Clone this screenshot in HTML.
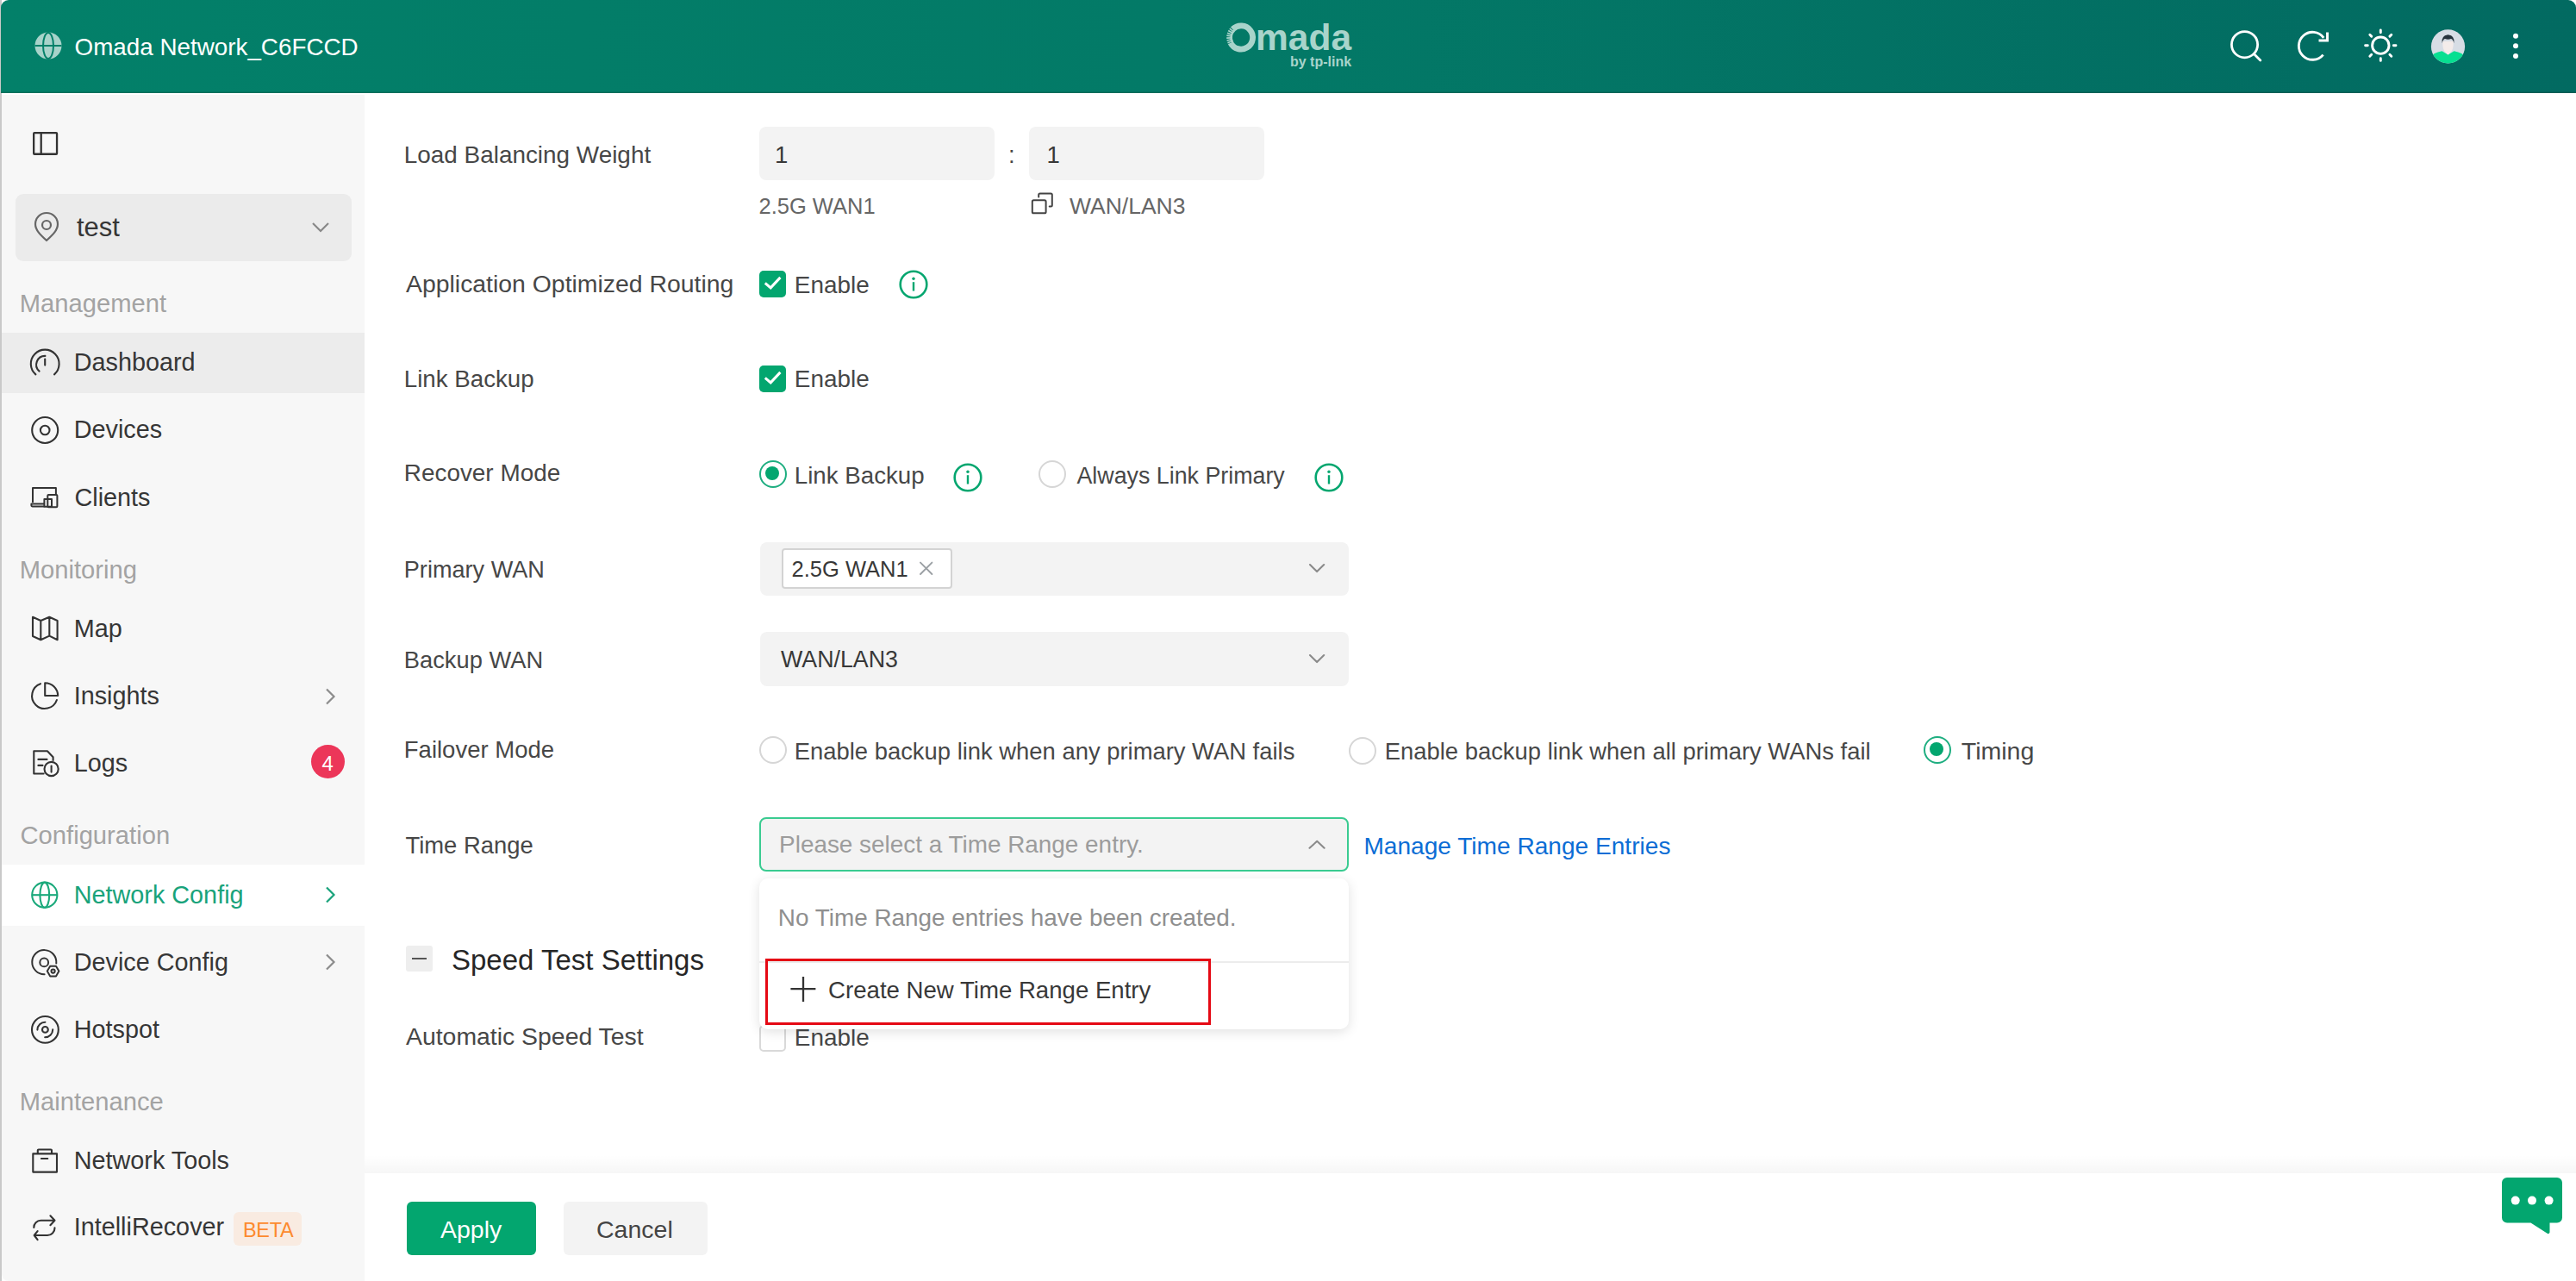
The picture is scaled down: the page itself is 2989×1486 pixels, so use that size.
<!DOCTYPE html>
<html><head><meta charset="utf-8">
<style>
*{box-sizing:border-box;margin:0;padding:0}
html,body{width:2989px;height:1486px;overflow:hidden;background:#fff;font-family:"Liberation Sans",sans-serif}
.a{position:absolute}
.t{position:absolute;white-space:nowrap;line-height:1;font-size:27.5px;color:#474747}
.s{font-size:28px;color:#363636}
.sec{color:#a3a3a3}
#edge{left:0;top:0;width:1.5px;height:1486px;background:#c9c9c9}
#hdr{left:1px;top:0;width:2988px;height:108px;border-radius:9px 9px 0 0;background:linear-gradient(90deg,#038069 0%,#037a67 45%,#026a61 100%);box-shadow:inset 0 -1.5px 0 rgba(0,0,0,0.12)}
#side{left:1.5px;top:110px;width:421.5px;height:1376px;background:#f7f7f7;border-bottom-left-radius:8px}
.hl{left:2px;width:421px;height:70px}
.inp{background:#f3f3f3;border-radius:8px}
.cb{width:31px;height:31px;border-radius:5px;background:#03a66f}
.cbo{width:31px;height:31px;border-radius:5px;border:2px solid #d9d9d9;background:#fff}
.rad{width:32px;height:32px;border-radius:50%;border:2px solid #d6d6d6;background:#fff}
.rad.on{border-color:#1eae80}
.rad.on::after{content:"";position:absolute;left:5px;top:4.7px;width:16px;height:16px;border-radius:50%;background:#03a66f}
svg{position:absolute;overflow:visible}
</style></head><body>
<div id="edge" class="a"></div>
<div id="hdr" class="a"></div>
<div id="side" class="a"></div>
<div class="a hl" style="top:386px;background:#ececec"></div>
<div class="a hl" style="top:1002.5px;height:71px;background:#fff"></div>

<!-- header -->
<svg style="left:40px;top:37px" width="32" height="32" viewBox="0 0 32 32">
 <circle cx="16" cy="16" r="15.5" fill="#a7d3ca"/>
 <path d="M0.5 16H31.5" stroke="#038069" stroke-width="2"/>
 <ellipse cx="16" cy="16" rx="6" ry="15" fill="none" stroke="#038069" stroke-width="2"/>
</svg>
<div class="t" style="left:86.6px;top:40.7px;color:#fff;font-size:27.8px">Omada Network_C6FCCD</div>

<svg style="left:1420px;top:24px" width="40" height="40" viewBox="0 0 40 40">
 <path d="M10.55 9.72A13.6 13.6 0 1 1 7.88 25.67" fill="none" stroke="#a8d4cb" stroke-width="6.8"/>
 <path d="M10.13 25.20A11.4 11.4 0 0 1 12.52 10.90" fill="none" stroke="#a8d4cb" stroke-width="2.6"/>
 <path d="M9.34 23.81L4.42 25.79M8.75 21.89L3.57 22.99M8.51 19.90L3.21 20.09M8.61 17.90L3.36 17.16M9.06 15.95L4.02 14.31M9.85 14.10L5.17 11.61M10.94 12.42L6.76 9.16M12.30 10.95L8.76 7.02" stroke="#a8d4cb" stroke-width="1.7"/>
</svg>
<div class="t" style="left:1457px;top:23px;color:#a8d4cb;font-size:42.5px;font-weight:bold">mada</div>
<div class="t" style="left:1497px;top:64.1px;color:#a8d4cb;font-size:16px;font-weight:bold">by tp-link</div>
<!-- header icons -->
<svg style="left:2580px;top:30px" width="50" height="50" viewBox="0 0 50 50">
 <circle cx="24.5" cy="21.7" r="15.1" fill="none" stroke="#fff" stroke-width="2.8"/>
 <path d="M35.3 32.5L42.8 40" stroke="#fff" stroke-width="2.8" stroke-linecap="round"/>
</svg>
<svg style="left:2660px;top:30px" width="50" height="50" viewBox="0 0 50 50">
 <path d="M35.6 33.6A16 16 0 1 1 36.2 13.8" fill="none" stroke="#fff" stroke-width="2.9"/>
 <path d="M30.5 17H40.5V7.5" fill="none" stroke="#fff" stroke-width="2.9"/>
</svg>
<svg style="left:2737px;top:28px" width="50" height="50" viewBox="0 0 50 50">
 <circle cx="25.3" cy="24.7" r="9.7" fill="none" stroke="#fff" stroke-width="2.9"/>
 <g stroke="#fff" stroke-width="2.9" stroke-linecap="round">
 <path d="M25.3 7V9.7M25.3 39.7V42.4M7.6 24.7H10.3M40.3 24.7H43M12.8 12.2L14.7 14.1M35.9 35.3L37.8 37.2M37.8 12.2L35.9 14.1M14.7 35.3L12.8 37.2"/>
 </g>
</svg>
<svg style="left:2820px;top:34px" width="40" height="40" viewBox="0 0 40 40">
 <defs><clipPath id="av"><circle cx="20.5" cy="19.9" r="19.6"/></clipPath></defs>
 <circle cx="20.5" cy="19.9" r="19.6" fill="#d7dde5"/>
 <g clip-path="url(#av)">
 <path d="M0 42V33Q3 27 13.5 25.2L20.5 29.5L27.5 25.2Q38 27 41 33V42Z" fill="#07df91"/>
 <path d="M14.3 14Q14 24 17.5 26.5L20.5 29.5L23.5 26.5Q27 24 26.7 14Z" fill="#f4ecea"/>
 <path d="M13.6 16.5Q12 7.5 20.5 6.3Q29 7.5 27.4 16.5Q26.5 11.5 24 11Q20.5 12.5 17 11Q14.5 11.5 13.6 16.5Z" fill="#26323c"/>
 </g>
</svg>
<svg style="left:2910px;top:34px" width="20" height="40" viewBox="0 0 20 40">
 <circle cx="9" cy="7.7" r="3" fill="#fff"/><circle cx="9" cy="19.3" r="3" fill="#fff"/><circle cx="9" cy="31.1" r="3" fill="#fff"/>
</svg>

<!-- sidebar -->
<svg style="left:38px;top:152.8px" width="30" height="28" viewBox="0 0 30 28">
 <rect x="1.15" y="1.15" width="26.9" height="24.6" rx="0.8" fill="none" stroke="#333" stroke-width="2.3"/>
 <path d="M9.7 1V26.8" stroke="#333" stroke-width="2.3"/>
</svg>
<div class="a" style="left:18px;top:225px;width:390px;height:78px;background:#ebebeb;border-radius:9px"></div>
<svg style="left:39px;top:247px" width="30" height="34" viewBox="0 0 30 34">
 <path d="M15 32C8 25.5 2 20 2 13A13 13 0 0 1 28 13C28 20 22 25.5 15 32Z" fill="none" stroke="#666" stroke-width="2.2" stroke-linejoin="round"/>
 <circle cx="15" cy="14" r="5" fill="none" stroke="#666" stroke-width="2.2"/>
</svg>
<div class="t s" style="left:89px;top:247.5px;font-size:31px">test</div>
<svg style="left:360px;top:256px" width="24" height="16" viewBox="0 0 24 16">
 <path d="M3 3L12 12L21 3" fill="none" stroke="#888" stroke-width="2.2"/>
</svg>


<!-- sidebar icons -->
<svg style="left:28px;top:398px" width="50" height="50" viewBox="0 0 50 50" fill="none" stroke="#333" stroke-width="2.1" stroke-linecap="round">
 <path d="M13.4 36.4A16.4 16.4 0 1 1 35 36.4"/>
 <path d="M17.6 32.6A10.1 10.1 0 0 1 24.4 14.9"/>
 <path d="M24.2 18.5V25.6"/>
</svg>
<svg style="left:28px;top:475px" width="50" height="50" viewBox="0 0 50 50" fill="none" stroke="#333" stroke-width="2.1">
 <circle cx="24.2" cy="24" r="15"/><circle cx="24.2" cy="24" r="5.3"/>
</svg>
<svg style="left:28px;top:553px" width="50" height="50" viewBox="0 0 50 50" fill="none" stroke="#333" stroke-width="2" stroke-linejoin="round">
 <path d="M10 30V12.9H36.9V21"/>
 <path d="M23.4 34.6H9.8A1.5 1.5 0 0 1 8.4 33V31.6H23.4"/>
 <rect x="27.3" y="21" width="11.1" height="14.3" rx="1"/>
 <rect x="23.4" y="26" width="8.6" height="8.7"/>
</svg>
<svg style="left:28px;top:704px" width="50" height="50" viewBox="0 0 50 50" fill="none" stroke="#333" stroke-width="2.1" stroke-linejoin="round">
 <path d="M10 11.7L19.3 16L29.3 11.7L38.6 16V38.3L29.3 33.6L19.3 38.3L10 34Z M19.3 16V38.3 M29.3 11.7V33.6"/>
</svg>
<svg style="left:28px;top:782px" width="50" height="50" viewBox="0 0 50 50" fill="none" stroke="#333" stroke-width="2.1">
 <path d="M24.2 10.3V25H39.2A15 15 0 0 0 24.2 10.3Z" stroke-linejoin="round"/>
 <path d="M19 11.2A14.8 14.8 0 1 0 37.9 30" stroke-linecap="round"/>
</svg>
<svg style="left:28px;top:860px" width="50" height="50" viewBox="0 0 50 50" fill="none" stroke="#333" stroke-width="2.1" stroke-linecap="round" stroke-linejoin="round">
 <path d="M22.6 37.5H11.3V11.3H26.9L33.6 18.3V21.9"/>
 <path d="M16.4 20.9H26.5M16.4 27.9H21.5"/>
 <circle cx="31.6" cy="32" r="8.1"/>
 <path d="M31.6 28.6V35.6"/>
</svg>
<svg style="left:28px;top:1013px" width="50" height="50" viewBox="0 0 50 50" fill="none" stroke="#1aa97b" stroke-width="2.1">
 <circle cx="23.8" cy="25.2" r="14.6"/><ellipse cx="23.8" cy="25.2" rx="5.4" ry="14.6"/><path d="M9.2 25.2H38.4"/>
</svg>
<svg style="left:28px;top:1091px" width="50" height="50" viewBox="0 0 50 50" fill="none" stroke="#333" stroke-width="2" stroke-linecap="round" stroke-linejoin="round">
 <path d="M23.6 39.2A14.05 14.05 0 1 1 37.3 26.5"/>
 <circle cx="23.2" cy="25.4" r="4.9"/>
 <path d="M30.2 29.8H37L40.4 35.6L37 41.4H30.2L26.8 35.6Z"/>
 <circle cx="33.6" cy="35.6" r="2.1"/>
</svg>
<svg style="left:28px;top:1169px" width="50" height="50" viewBox="0 0 50 50" fill="none" stroke="#333" stroke-width="2.1" stroke-linecap="round">
 <circle cx="24.4" cy="25.4" r="15.4"/>
 <path d="M15.4 25.6A9 9 0 0 1 24.4 16.8"/>
 <path d="M33.2 25.4A9 9 0 0 1 24.2 34.3"/>
 <circle cx="24.4" cy="25.4" r="3.4"/>
</svg>
<svg style="left:28px;top:1321px" width="50" height="50" viewBox="0 0 50 50" fill="none" stroke="#333" stroke-width="2.1" stroke-linejoin="round">
 <rect x="10.3" y="17.4" width="27.7" height="21.2"/>
 <path d="M15.8 17.4V13.5A1 1 0 0 1 16.8 12.5H31A1 1 0 0 1 32 13.5V17.4"/>
 <path d="M19.9 23H27.3" stroke-linecap="round"/>
</svg>
<svg style="left:28px;top:1399px" width="50" height="50" viewBox="0 0 50 50" fill="none" stroke="#333" stroke-width="2.1" stroke-linecap="round" stroke-linejoin="round">
 <path d="M11.3 25A8 8 0 0 1 19.3 16.8H35.5M30.4 11.3L35.5 16.8L30.4 22.2"/>
 <path d="M35.5 25.4A8.5 8.5 0 0 1 27 34H11.7M15.6 29.1L11.7 34L15.6 39.2"/>
</svg>
<div class="t s sec" style="left:22.7px;top:338.2px;font-size:29.2px">Management</div>
<div class="t s" style="left:85.7px;top:406.4px;font-size:28.8px">Dashboard</div>
<div class="t s" style="left:85.7px;top:484.1px;font-size:28.8px">Devices</div>
<div class="t s" style="left:86.5px;top:562.6px;font-size:28.8px">Clients</div>
<div class="t s sec" style="left:22.7px;top:646.8px;font-size:29.2px">Monitoring</div>
<div class="t s" style="left:85.7px;top:714.6px;font-size:28.8px">Map</div>
<div class="t s" style="left:85.7px;top:793.0px;font-size:28.8px">Insights</div>
<div class="t s" style="left:85.7px;top:870.8px;font-size:28.8px">Logs</div>
<div class="t s sec" style="left:23.5px;top:955.0px;font-size:29.2px">Configuration</div>
<div class="t s" style="left:85.7px;top:1023.9px;color:#19a37b;font-size:28.8px">Network Config</div>
<div class="t s" style="left:85.7px;top:1102.4px;font-size:28.8px">Device Config</div>
<div class="t s" style="left:85.7px;top:1180.1px;font-size:28.8px">Hotspot</div>
<div class="t s sec" style="left:22.7px;top:1264.3px;font-size:29.2px">Maintenance</div>
<div class="t s" style="left:85.7px;top:1331.9px;font-size:28.8px">Network Tools</div>
<div class="t s" style="left:85.7px;top:1408.6px;font-size:28.8px">IntelliRecover</div>
<div class="a" style="left:271px;top:1406px;width:79px;height:39px;background:#f9ebe1;border-radius:6px"></div>
<div class="t" style="left:282px;top:1416px;font-size:23.5px;color:#fd8a2e;letter-spacing:-0.3px">BETA</div>
<div class="a" style="left:361px;top:864px;width:39px;height:39px;border-radius:50%;background:#ec3659"></div>
<div class="t" style="left:373.5px;top:873.5px;font-size:24px;color:#fff">4</div>

<svg style="left:376px;top:797px" width="16" height="22" viewBox="0 0 16 22"><path d="M3 2.5L11.5 11L3 19.5" fill="none" stroke="#8c8c8c" stroke-width="2.2"/></svg>
<svg style="left:376px;top:1027px" width="16" height="22" viewBox="0 0 16 22"><path d="M3 2.5L11.5 11L3 19.5" fill="none" stroke="#19a37b" stroke-width="2.2"/></svg>
<svg style="left:376px;top:1105px" width="16" height="22" viewBox="0 0 16 22"><path d="M3 2.5L11.5 11L3 19.5" fill="none" stroke="#8c8c8c" stroke-width="2.2"/></svg>
<!-- content labels -->
<div class="t" style="left:468.8px;top:165.6px;font-size:27.9px">Load Balancing Weight</div>
<div class="t" style="left:471.0px;top:314.5px;font-size:28.4px">Application Optimized Routing</div>
<div class="t" style="left:468.8px;top:426.4px;font-size:27.7px">Link Backup</div>
<div class="t" style="left:468.8px;top:535.2px;font-size:27.9px">Recover Mode</div>
<div class="t" style="left:468.8px;top:647.3px;font-size:27.1px">Primary WAN</div>
<div class="t" style="left:468.8px;top:752.1px;font-size:27.3px">Backup WAN</div>
<div class="t" style="left:468.8px;top:856.1px;font-size:27.5px">Failover Mode</div>
<div class="t" style="left:470.5px;top:967.2px;font-size:27.4px">Time Range</div>
<div class="t" style="left:471.0px;top:1188.3px;font-size:28.4px">Automatic Speed Test</div>

<!-- LBW -->
<div class="a inp" style="left:881px;top:147px;width:273px;height:62px"></div>
<div class="t" style="left:899px;top:165.9px;color:#383838">1</div>
<div class="t" style="left:1170px;top:165.9px">:</div>
<div class="a inp" style="left:1194px;top:147px;width:273px;height:62px"></div>
<div class="t" style="left:1214.5px;top:165.9px;color:#383838">1</div>
<div class="t" style="left:880.5px;top:226.5px;color:#666;font-size:25.5px">2.5G WAN1</div>
<svg style="left:1196px;top:223px" width="27" height="26" viewBox="0 0 27 26">
 <rect x="1.8" y="9.3" width="15.8" height="15" rx="1.6" fill="none" stroke="#444" stroke-width="2"/>
 <path d="M9.2 5.4V2.9A1.5 1.5 0 0 1 10.7 1.4H23.3A1.5 1.5 0 0 1 24.8 2.9V14.9A1.5 1.5 0 0 1 23.3 16.4H21.7" fill="none" stroke="#444" stroke-width="2" stroke-linecap="round"/>
</svg>
<div class="t" style="left:1241px;top:225.8px;color:#666;font-size:26.5px">WAN/LAN3</div>

<!-- AOR -->
<div class="a cb" style="left:881px;top:314px"></div>
<svg style="left:881px;top:314px" width="31" height="31" viewBox="0 0 31 31"><path d="M6.8 14.4L13.2 19.9L24.4 7.9" fill="none" stroke="#fff" stroke-width="3.1"/></svg>
<div class="t" style="left:921.8px;top:316.7px;font-size:27.9px">Enable</div>
<svg style="left:1043px;top:313px" width="34" height="34" viewBox="0 0 34 34">
 <circle cx="17" cy="17" r="15.3" fill="none" stroke="#03a66f" stroke-width="2.6"/>
 <circle cx="17" cy="10.2" r="1.7" fill="#03a66f"/><path d="M17 14.2V24.5" stroke="#03a66f" stroke-width="2.4"/>
</svg>

<!-- Link backup -->
<div class="a cb" style="left:881px;top:423.5px"></div>
<svg style="left:881px;top:423.5px" width="31" height="31" viewBox="0 0 31 31"><path d="M6.8 14.4L13.2 19.9L24.4 7.9" fill="none" stroke="#fff" stroke-width="3.1"/></svg>
<div class="t" style="left:921.8px;top:426.3px;font-size:27.9px">Enable</div>

<!-- Recover mode -->
<div class="a rad on" style="left:880.5px;top:534px"></div>
<div class="t" style="left:921.8px;top:537.8px;font-size:27.7px">Link Backup</div>
<svg style="left:1106px;top:537px" width="34" height="34" viewBox="0 0 34 34">
 <circle cx="17" cy="17" r="15.3" fill="none" stroke="#03a66f" stroke-width="2.6"/>
 <circle cx="17" cy="10.2" r="1.7" fill="#03a66f"/><path d="M17 14.2V24.5" stroke="#03a66f" stroke-width="2.4"/>
</svg>
<div class="a rad" style="left:1205px;top:534px"></div>
<div class="t" style="left:1249.5px;top:538.6px;font-size:26.8px">Always Link Primary</div>
<svg style="left:1525px;top:537px" width="34" height="34" viewBox="0 0 34 34">
 <circle cx="17" cy="17" r="15.3" fill="none" stroke="#03a66f" stroke-width="2.6"/>
 <circle cx="17" cy="10.2" r="1.7" fill="#03a66f"/><path d="M17 14.2V24.5" stroke="#03a66f" stroke-width="2.4"/>
</svg>

<!-- Primary WAN -->
<div class="a inp" style="left:882px;top:628.5px;width:683px;height:62.5px"></div>
<div class="a" style="left:907px;top:636px;width:197.5px;height:47px;background:#fff;border:2px solid #d3d3d3;border-radius:4px"></div>
<div class="t" style="left:918.6px;top:647.8px;font-size:25.5px;color:#383838">2.5G WAN1</div>
<svg style="left:1066px;top:651px" width="18" height="18" viewBox="0 0 18 18"><path d="M2 1.6L15.4 15M15.4 1.6L2 15" stroke="#9ba0a4" stroke-width="1.9" stroke-linecap="round"/></svg>
<svg style="left:1517px;top:651px" width="24" height="16" viewBox="0 0 24 16"><path d="M3 4L11.1 12.1L19.2 4" fill="none" stroke="#8a8a8a" stroke-width="2.1" stroke-linecap="round" stroke-linejoin="round"/></svg>

<!-- Backup WAN -->
<div class="a inp" style="left:882px;top:733px;width:683px;height:62.5px"></div>
<div class="t" style="left:906px;top:751.6px;font-size:26.8px;color:#383838">WAN/LAN3</div>
<svg style="left:1517px;top:755.6px" width="24" height="16" viewBox="0 0 24 16"><path d="M3 4L11.1 12.1L19.2 4" fill="none" stroke="#8a8a8a" stroke-width="2.1" stroke-linecap="round" stroke-linejoin="round"/></svg>

<!-- Failover -->
<div class="a rad" style="left:880.5px;top:854px"></div>
<div class="t" style="left:921.8px;top:858.1px;font-size:27.4px">Enable backup link when any primary WAN fails</div>
<div class="a rad" style="left:1565px;top:854.7px"></div>
<div class="t" style="left:1606.8px;top:858.1px;font-size:27.4px">Enable backup link when all primary WANs fail</div>
<div class="a rad on" style="left:2232.4px;top:854px"></div>
<div class="t" style="left:2275.8px;top:857.2px;font-size:28.5px">Timing</div>

<!-- Time range -->
<div class="a" style="left:881px;top:948px;width:683.5px;height:63px;background:#f3f3f3;border:2.3px solid #3acb91;border-radius:8px"></div>
<div class="t" style="left:904.1px;top:965.7px;color:#9c9c9c;font-size:27.9px">Please select a Time Range entry.</div>
<svg style="left:1516px;top:971px" width="24" height="16" viewBox="0 0 24 16"><path d="M3.5 12.7L12.2 4.8L20.6 12.7" fill="none" stroke="#8a8a8a" stroke-width="2.1" stroke-linecap="round" stroke-linejoin="round"/></svg>
<div class="t" style="left:1582.4px;top:967.5px;color:#0b6dd5;font-size:28.1px">Manage Time Range Entries</div>

<!-- Speed test -->
<div class="a" style="left:470.5px;top:1097.4px;width:31px;height:30px;background:#eeeeee;border-radius:3px"></div>
<div class="a" style="left:477.5px;top:1111px;width:17px;height:2.4px;background:#555"></div>
<div class="t" style="left:524px;top:1097px;font-size:33px;color:#262626">Speed Test Settings</div>
<div class="a cbo" style="left:881px;top:1189px"></div>
<div class="t" style="left:921.8px;top:1190.0px;font-size:27.9px">Enable</div>

<!-- popup -->
<div class="a" style="left:881px;top:1019px;width:684px;height:175px;background:#fff;border-radius:10px;box-shadow:0 3px 14px rgba(0,0,0,0.12)"></div>
<div class="t" style="left:902.8px;top:1050.7px;color:#8f8f8f;font-size:27.9px">No Time Range entries have been created.</div>
<div class="a" style="left:881px;top:1115.3px;width:684px;height:1.5px;background:#ececec"></div>
<div class="a" style="left:887.5px;top:1112.3px;width:517.5px;height:76.3px;border:3px solid #e50914"></div>
<svg style="left:916px;top:1132px" width="32" height="32" viewBox="0 0 32 32"><path d="M16 1V30M1.4 15.1H30.4" stroke="#333" stroke-width="2.3"/></svg>
<div class="t" style="left:961.1px;top:1135.4px;font-size:27.6px;color:#383838">Create New Time Range Entry</div>

<!-- footer -->
<div class="a" style="left:423px;top:1340px;width:2566px;height:21px;background:linear-gradient(180deg,rgba(0,0,0,0) 0%,rgba(0,0,0,0.035) 100%)"></div>
<div class="a" style="left:472px;top:1394px;width:150px;height:62px;background:#03a66f;border-radius:6px"></div>
<div class="t" style="left:511px;top:1412px;color:#fff;font-size:28.5px">Apply</div>
<div class="a" style="left:653.5px;top:1394px;width:167px;height:62px;background:#f3f3f3;border-radius:6px"></div>
<div class="t" style="left:692px;top:1412px;color:#444;font-size:28.5px">Cancel</div>

<svg style="left:2903px;top:1365px" width="71" height="68" viewBox="0 0 71 68">
 <path d="M6 1H64A6 6 0 0 1 70 7V47.5A6 6 0 0 1 64 53.5H55.5V64.5A2 2 0 0 1 53 66L33.5 53.5H6A6 6 0 0 1 0 47.5V7A6 6 0 0 1 6 1Z" fill="#03a66f"/>
 <circle cx="15.7" cy="27.6" r="5" fill="#fff"/><circle cx="35" cy="27.6" r="5" fill="#fff"/><circle cx="54.6" cy="27.6" r="5" fill="#fff"/>
</svg>

</body></html>
